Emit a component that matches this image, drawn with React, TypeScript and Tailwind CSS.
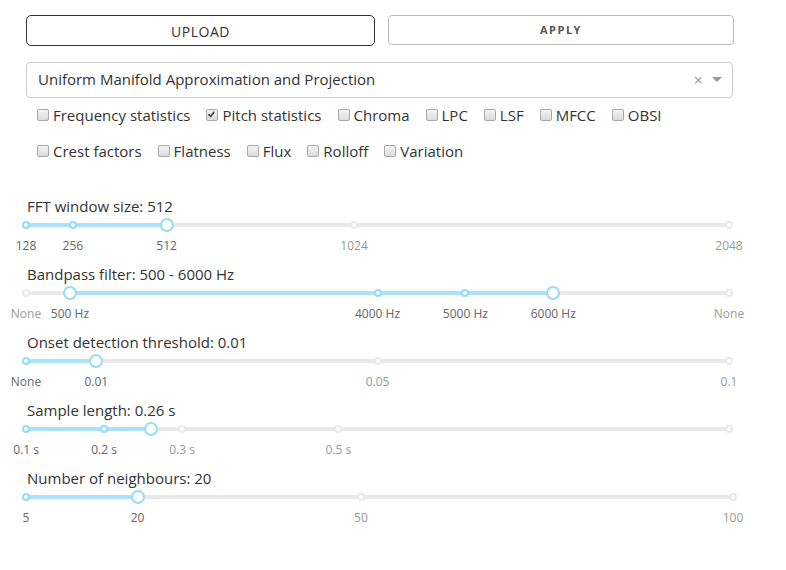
import React from "react";

type Mark = { v: number; label: string };

interface SliderProps {
  label: string;
  min: number;
  max: number;
  marks: Mark[];
  lo?: number;
  hi: number;
  range?: boolean;
  width: number;
}

const FEATURES_1 = ["Frequency statistics", "Pitch statistics", "Chroma", "LPC", "LSF", "MFCC", "OBSI"];
const FEATURES_2 = ["Crest factors", "Flatness", "Flux", "Rolloff", "Variation"];
const CHECKED = ["Pitch statistics"];

function Box({ checked }: { checked: boolean }) {
  return (
    <span className="relative mr-[4px] inline-block h-[12px] w-[12px] shrink-0 rounded-[2px] border border-[#a8a8a8] bg-gradient-to-b from-[#f4f4f4] to-[#dcdcdc]">
      {checked && (
        <svg viewBox="0 0 12 12" className="absolute left-[0px] top-[0px] h-[10px] w-[10px]">
          <path d="M2.3 5.6 L4.4 7.8 L8.2 2.6" fill="none" stroke="#444" strokeWidth="1.9" strokeLinecap="round" strokeLinejoin="round" />
        </svg>
      )}
    </span>
  );
}

function Checklist({ items }: { items: string[] }) {
  return (
    <div className="flex h-[36px] items-center gap-[16px] pb-[2px] pl-[11px]">
      {items.map((it) => (
        <label key={it} className="flex items-center text-[15px] text-[#333]">
          <Box checked={CHECKED.includes(it)} />
          {it}
        </label>
      ))}
    </div>
  );
}

function Slider({ label, min, max, marks, lo, hi, range, width }: SliderProps) {
  const start = lo ?? min;
  const pct = (v: number) => ((v - min) / (max - min)) * 100;
  const on = (v: number) => v >= start && v <= hi;
  return (
    <div className="mb-[13px]">
      <div className="h-[20px] pl-[1px] text-[15px] leading-[16px] text-[#333]">{label}</div>
      <div className="relative h-[14px]" style={{ width }}>
        <div className="absolute left-0 right-0 top-[5px] h-[4px] rounded-full bg-[#e9e9e9]" />
        <div
          className="absolute top-[5px] h-[4px] rounded-full bg-[#abe2fb]"
          style={{ left: `${pct(start)}%`, width: `${pct(hi) - pct(start)}%` }}
        />
        {marks.map((m) => (
          <span
            key={m.v}
            className={`absolute top-[3px] h-[8px] w-[8px] -translate-x-1/2 rounded-full border-2 bg-white ${
              on(m.v) ? "border-[#96dbfa]" : "border-[#e9e9e9]"
            }`}
            style={{ left: `${pct(m.v)}%` }}
          />
        ))}
        {range && (
          <span
            className="absolute top-0 h-[14px] w-[14px] -translate-x-1/2 rounded-full border-2 border-[#96dbfa] bg-white"
            style={{ left: `${pct(start)}%` }}
          />
        )}
        <span
          className="absolute top-0 h-[14px] w-[14px] -translate-x-1/2 rounded-full border-2 border-[#96dbfa] bg-white"
          style={{ left: `${pct(hi)}%` }}
        />
      </div>
      <div className="relative mt-[6px] h-[15px]" style={{ width }}>
        {marks.map((m) =>
          m.label ? (
            <span
              key={m.v}
              className={`absolute top-0 -translate-x-1/2 whitespace-nowrap text-[12px] leading-[16px] ${
                on(m.v) ? "text-[#666]" : "text-[#999]"
              }`}
              style={{ left: `${pct(m.v)}%` }}
            >
              {m.label}
            </span>
          ) : null
        )}
      </div>
    </div>
  );
}

export default function App() {
  return (
    <div className="min-h-[570px] bg-white pl-[26px] pt-[15px] font-['Open_Sans',sans-serif]">
      <div className="flex w-[708px] gap-[13px]">
        <button className="h-[31px] w-[349px] rounded-[5px] border border-[#333] pt-[2px] text-[14px] tracking-[0.5px] text-[#333]">
          UPLOAD
        </button>
        <button className="h-[30px] w-[346px] rounded-[4px] border border-[#bbb] pt-[1px] text-[11px] font-bold tracking-[1.5px] text-[#555]">
          APPLY
        </button>
      </div>

      <div className="mt-[16px] flex h-[36px] w-[707px] items-center rounded-[4px] border border-[#ccc] pb-[1px] pl-[11px] pr-[10px] text-[15px] text-[#333]">
        <span className="flex-1">Uniform Manifold Approximation and Projection</span>
        <span className="mr-[9px] text-[16px] leading-none text-[#999]">×</span>
        <svg width="10" height="5" viewBox="0 0 10 5">
          <path d="M0 0 H10 L5 5 Z" fill="#999" />
        </svg>
      </div>

      <Checklist items={FEATURES_1} />
      <Checklist items={FEATURES_2} />

      <div className="mt-[28px]">
        <Slider
          label="FFT window size: 512"
          min={128}
          max={2048}
          width={703}
          hi={512}
          marks={[
            { v: 128, label: "128" },
            { v: 256, label: "256" },
            { v: 512, label: "512" },
            { v: 1024, label: "1024" },
            { v: 2048, label: "2048" },
          ]}
        />
        <Slider
          label="Bandpass filter: 500 - 6000 Hz"
          min={0}
          max={8000}
          width={703}
          lo={500}
          hi={6000}
          range
          marks={[
            { v: 0, label: "None" },
            { v: 500, label: "500 Hz" },
            { v: 4000, label: "4000 Hz" },
            { v: 5000, label: "5000 Hz" },
            { v: 6000, label: "6000 Hz" },
            { v: 8000, label: "None" },
          ]}
        />
        <Slider
          label="Onset detection threshold: 0.01"
          min={0}
          max={0.1}
          width={703}
          hi={0.01}
          marks={[
            { v: 0, label: "None" },
            { v: 0.01, label: "0.01" },
            { v: 0.05, label: "0.05" },
            { v: 0.1, label: "0.1" },
          ]}
        />
        <Slider
          label="Sample length: 0.26 s"
          min={0.1}
          max={1}
          width={703}
          hi={0.26}
          marks={[
            { v: 0.1, label: "0.1 s" },
            { v: 0.2, label: "0.2 s" },
            { v: 0.3, label: "0.3 s" },
            { v: 0.5, label: "0.5 s" },
            { v: 1, label: "" },
          ]}
        />
        <Slider
          label="Number of neighbours: 20"
          min={5}
          max={100}
          width={707}
          hi={20}
          marks={[
            { v: 5, label: "5" },
            { v: 20, label: "20" },
            { v: 50, label: "50" },
            { v: 100, label: "100" },
          ]}
        />
      </div>
    </div>
  );
}
